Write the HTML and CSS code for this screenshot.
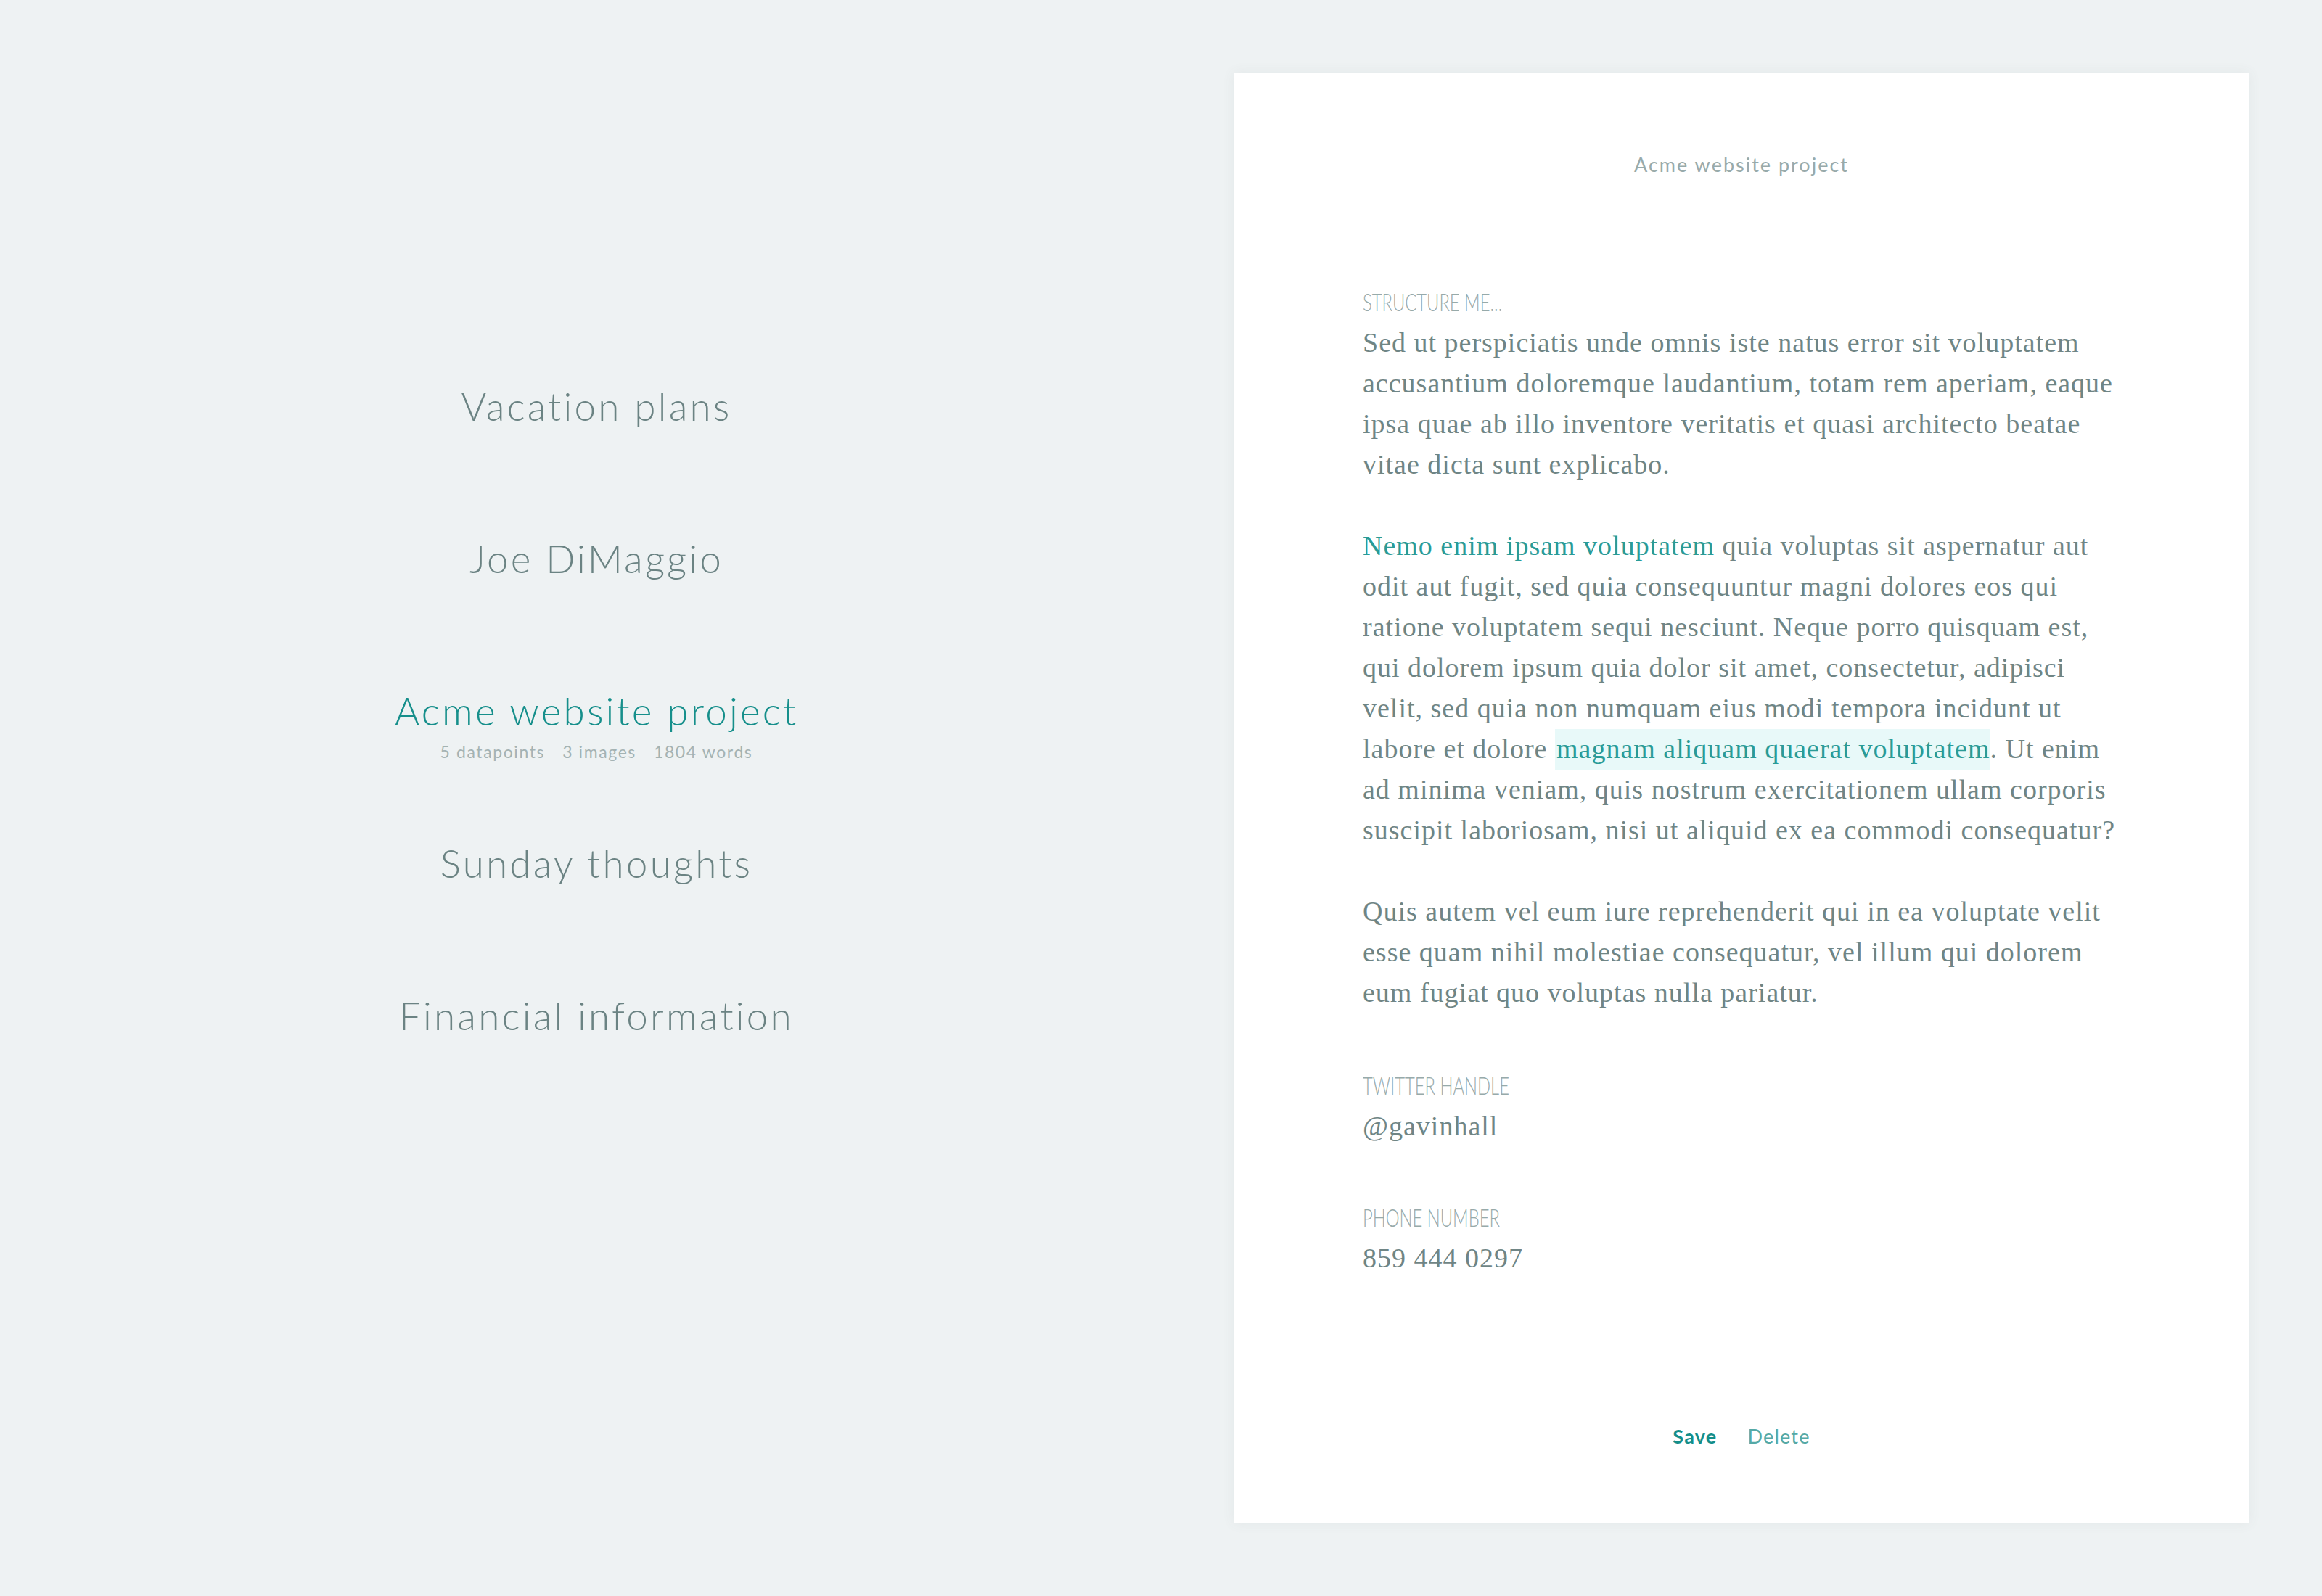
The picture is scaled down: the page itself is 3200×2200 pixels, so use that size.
FILE: index.html
```html
<!DOCTYPE html>
<html lang="en">
<head>
<meta charset="utf-8">
<title>Notes</title>
<link rel="stylesheet" href="styles.css">
</head>
<body>
<div class="app">
  <nav class="nav">
    <div class="nav-item"><div class="nav-title">Vacation plans</div></div>
    <div class="nav-item"><div class="nav-title">Joe DiMaggio</div></div>
    <div class="nav-item is-active">
      <div class="nav-title">Acme website project</div>
      <div class="nav-meta"><span>5 datapoints</span><span>3 images</span><span>1804 words</span></div>
    </div>
    <div class="nav-item"><div class="nav-title">Sunday thoughts</div></div>
    <div class="nav-item"><div class="nav-title">Financial information</div></div>
  </nav>

  <main class="card">
    <div class="card-title">Acme website project</div>

    <section class="field field-first">
      <div class="label"><span>Structure me...</span></div>
      <div class="prose">
        <p>Sed ut perspiciatis unde omnis iste natus error sit voluptatem accusantium doloremque laudantium, totam rem aperiam, eaque ipsa quae ab illo inventore veritatis et quasi architecto beatae vitae dicta sunt explicabo.</p>
        <p><span class="link">Nemo enim ipsam voluptatem</span> quia voluptas sit aspernatur aut odit aut fugit, sed quia consequuntur magni dolores eos qui ratione voluptatem sequi nesciunt. Neque porro quisquam est, qui dolorem ipsum quia dolor sit amet, consectetur, adipisci velit, sed quia non numquam eius modi tempora incidunt ut labore et dolore <span class="mark">magnam aliquam quaerat voluptatem</span>. Ut enim ad minima veniam, quis nostrum exercitationem ullam corporis suscipit laboriosam, nisi ut aliquid ex ea commodi consequatur?</p>
        <p>Quis autem vel eum iure reprehenderit qui in ea voluptate velit esse quam nihil molestiae consequatur, vel illum qui dolorem eum fugiat quo voluptas nulla pariatur.</p>
      </div>
    </section>

    <section class="field field-twitter">
      <div class="label"><span>Twitter handle</span></div>
      <div class="value">@gavinhall</div>
    </section>

    <section class="field field-phone">
      <div class="label"><span>Phone number</span></div>
      <div class="value">859 444 0297</div>
    </section>

    <div class="actions">
      <a class="btn btn-save">Save</a>
      <a class="btn btn-delete">Delete</a>
    </div>
  </main>
</div>
</body>
</html>
```

FILE: styles.css
```css
html, body {
  margin: 0;
  padding: 0;
}

body {
  background: #eef2f3;
  font-family: "Lato", "Open Sans", sans-serif;
  color: #6f8585;
}

.app {
  display: flex;
  align-items: flex-start;
  width: 3200px;
  min-height: 2200px;
}

/* ---------- left list ---------- */
.nav {
  flex: 1;
  display: flex;
  flex-direction: column;
  align-items: center;
  padding-top: 528px;
}

.nav-item {
  height: 210px;
  display: flex;
  flex-direction: column;
  align-items: center;
}

.nav-title {
  font-size: 53px;
  line-height: 64px;
  font-weight: 300;
  letter-spacing: 3.2px;
  color: #6b8383;
  white-space: nowrap;
}

.is-active .nav-title {
  color: #168f8b;
}

.nav-meta {
  margin-top: 9px;
  display: flex;
  gap: 24px;
  font-size: 23px;
  line-height: 30px;
  font-weight: 400;
  letter-spacing: 1.6px;
  color: #a4b3b3;
}

/* ---------- card ---------- */
.card {
  flex: none;
  box-sizing: border-box;
  width: 1400px;
  height: 2000px;
  margin: 100px 100px 100px 56px;
  padding: 107px 178px 100px;
  background: #ffffff;
  box-shadow: 0 0 16px rgba(80, 100, 100, 0.07);
  display: flex;
  flex-direction: column;
}

.card-title {
  text-align: center;
  font-size: 27px;
  line-height: 40px;
  font-weight: 400;
  letter-spacing: 2px;
  color: #98aaaa;
}

.label {
  height: 56px;
  line-height: 56px;
  font-family: "Lato", "Open Sans", sans-serif;
  font-weight: 300;
  font-size: 34px;
  text-transform: uppercase;
  color: #97aaaa;
  white-space: nowrap;
}

.label span {
  display: inline-block;
  transform: scaleX(0.7);
  transform-origin: left center;
}

.prose,
.value {
  font-family: "Liberation Serif", "DejaVu Serif", serif;
  font-size: 38px;
  line-height: 56px;
  letter-spacing: 1px;
  color: #6f8585;
}

.prose p {
  margin: 0 0 56px;
}

.prose p:last-child {
  margin-bottom: 0;
}

.link {
  color: #2a9b97;
}

.mark {
  color: #2a9b97;
  background: #e8f9f9;
  padding: 6px 0 8px 2px;
}

.field-first {
  margin-top: 141px;
}

.field-twitter {
  margin-top: 72px;
}

.field-phone {
  margin-top: 70px;
}

.actions {
  margin-top: auto;
  display: flex;
  justify-content: center;
  gap: 42px;
  font-size: 27px;
  line-height: 40px;
}

.btn {
  cursor: pointer;
  letter-spacing: 1.2px;
}

.btn-save {
  font-weight: 700;
  color: #148e8a;
}

.btn-delete {
  font-weight: 400;
  color: #55a9a6;
}
```
